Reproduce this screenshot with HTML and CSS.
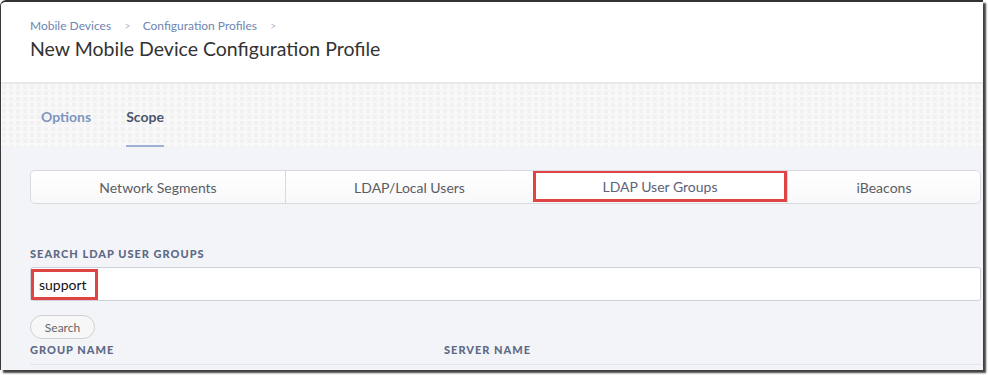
FILE: index.html
```html
<!DOCTYPE html>
<html lang="en">
<head>
  <meta charset="UTF-8">
  <title>New Mobile Device Configuration Profile</title>
  <link rel="stylesheet" href="styles.css">
</head>
<body>
  <div class="window">
    <header class="page-head">
      <nav class="crumbs">
        <a href="#">Mobile Devices</a>
        <span class="sep">&gt;</span>
        <a href="#">Configuration Profiles</a>
        <span class="sep">&gt;</span>
      </nav>
      <h1>New Mobile Device Configuration Profile</h1>
    </header>

    <div class="tabbar">
      <a href="#" class="tab">Options</a>
      <a href="#" class="tab active">Scope</a>
    </div>

    <main class="content">
      <div class="segments">
        <div class="seg">Network Segments</div>
        <div class="seg">LDAP/Local Users</div>
        <div class="seg selected">LDAP User Groups</div>
        <div class="seg">iBeacons</div>
      </div>

      <label class="field-label" for="q">Search LDAP User Groups</label>
      <div class="search-box">
        <span class="mark-small">support</span>
      </div>

      <button class="btn">Search</button>

      <div class="cols">
        <div class="col">Group Name</div>
        <div class="col">Server Name</div>
      </div>
    </main>
  </div>
</body>
</html>
```

FILE: styles.css
```css
html, body {
  margin: 0;
  padding: 0;
  background: #fff;
}
body {
  font-family: 'Lato', 'Liberation Sans', sans-serif;
  width: 988px;
  height: 375px;
  overflow: hidden;
}
.window {
  width: 982px;
  height: 368px;
  border-top: 2px solid #333;
  border-left: 1px solid #3a3a3a;
  border-top-left-radius: 6px;
  background: #f3f4f8;
  box-shadow: 3px 3px 2px rgba(0, 0, 0, 0.75);
  overflow: hidden;
}

.page-head {
  background: #fff;
  height: 82px;
  padding: 0 0 0 29px;
  box-sizing: border-box;
  border-bottom: 2px solid #e8e8ea;
}
.crumbs {
  padding-top: 16px;
  font-size: 12px;
  line-height: 16px;
}
.crumbs a {
  color: #6e86b0;
  text-decoration: none;
}
.crumbs .sep {
  color: #b8bfcc;
  margin: 0 9px 0 10px;
  font-size: 11px;
}
.page-head h1 {
  margin: 3px 0 0;
  font-size: 19.5px;
  font-weight: 400;
  color: #333;
  line-height: 24px;
}

.tabbar {
  height: 63px;
  box-sizing: border-box;
  padding-left: 40px;
  display: flex;
  gap: 35px;
  background-color: #f8f8f8;
  background-image: radial-gradient(circle at 3px 3px, #f1f1f1 2px, transparent 2.5px);
  background-size: 7px 6px;
}
.tab {
  display: block;
  padding-top: 24px;
  height: 63px;
  box-sizing: border-box;
  font-size: 14px;
  font-weight: 700;
  color: #7d95be;
  text-decoration: none;
}
.tab.active {
  color: #4b556e;
  border-bottom: 2px solid #9bb1d6;
}

.content {
  padding: 23px 2px 0 29px;
}
.segments {
  display: flex;
  height: 34px;
  box-sizing: border-box;
  border: 1px solid #d7dae1;
  border-radius: 5px;
  background: linear-gradient(#fff, #f8f8fa);
  overflow: hidden;
}
.seg {
  flex: 1;
  box-sizing: border-box;
  display: flex;
  align-items: center;
  justify-content: center;
  font-size: 14px;
  color: #5a5d63;
  border-left: 1px solid #d7dae1;
}
.seg:first-child {
  border-left: none;
  flex: 0 0 254px;
}
.seg:nth-child(2) {
  flex: 0 0 248px;
}
.seg:nth-child(3) {
  flex: 0 0 254px;
}
.seg.selected {
  background: #fff;
  color: #5c6378;
  border: 3px solid #e04545;
  border-top-width: 2px;
  margin-bottom: 1px;
}

.field-label {
  display: block;
  margin-top: 43px;
  font-size: 11px;
  font-weight: 900;
  letter-spacing: 1px;
  text-transform: uppercase;
  color: #5d6a86;
  line-height: 14px;
}
.search-box {
  margin-top: 6px;
  height: 34px;
  box-sizing: border-box;
  background: #fff;
  border: 1px solid #cdd1da;
  border-radius: 3px;
  display: flex;
  align-items: stretch;
  padding: 1px 0 0 0;
}
.mark-small {
  display: flex;
  align-items: center;
  padding-left: 5px;
  width: 67px;
  box-sizing: border-box;
  border: 3px solid #e04545;
  font-size: 14px;
  color: #111;
}

.btn {
  display: block;
  margin-top: 14px;
  width: 65px;
  height: 24px;
  padding: 0;
  font-family: inherit;
  font-size: 12px;
  color: #666;
  background: #f7f7f8;
  border: 1px solid #cfd1d6;
  border-radius: 12px;
}

.cols {
  display: flex;
  margin-top: 4px;
  padding-bottom: 7px;
  border-bottom: 1px solid #e3e5ea;
}
.col {
  font-size: 11px;
  font-weight: 900;
  letter-spacing: 1px;
  text-transform: uppercase;
  color: #5d6a86;
  line-height: 14px;
}
.col:first-child {
  width: 414px;
}
```
